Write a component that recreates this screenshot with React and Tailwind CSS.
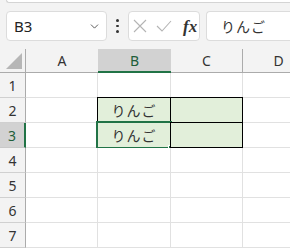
import { Fragment } from 'react';
import { ChevronDown } from 'lucide-react';

const COLS = ['A', 'B', 'C', 'D'];
const ROWS = [1, 2, 3, 4, 5, 6, 7];

// cells with values / fill
const values = { B2: 'りんご', B3: 'りんご' };
const filled = ['B2', 'C2', 'B3', 'C3'];
const active = 'B3';

function Cell({ id }) {
  const isFilled = filled.includes(id);
  const isActive = id === active;
  return (
    <div
      className={`relative border-r border-b border-[#e1e1e1] flex items-center justify-center text-[14px] text-[#333] ${
        isFilled ? 'bg-[#e2efda]' : 'bg-white'
      }`}
    >
      {isFilled && <span className="absolute -top-px -left-px -right-px -bottom-px border border-black" />}
      {values[id] && <span className="relative tracking-[1px]">{values[id]}</span>}
      {isActive && (
        <>
          <span className="absolute -top-[2px] -left-[2px] -right-[2px] -bottom-[2px] border-2 border-[#217346]" />
          <span className="absolute -right-[4px] -bottom-[4px] w-[6px] h-[6px] bg-[#217346] border border-white" />
        </>
      )}
    </div>
  );
}

export default function App() {
  return (
    <div
      className="w-[290px] h-[248px] overflow-hidden bg-[#f3f3f3] text-[#222]"
      style={{ fontFamily: '"Noto Sans", "Noto Sans CJK JP", sans-serif' }}
    >
      {/* ribbon edge */}
      <div className="h-[3px] ml-[6px] bg-white border-b border-l border-[#d4d4d4] rounded-bl-[5px]" />

      {/* formula bar */}
      <div className="mt-[8px] h-[30px] flex items-center pl-[6px]">
        <div className="w-[101px] h-[30px] bg-white border border-[#dcdcdc] rounded-[4px] flex items-center justify-between pl-[7px] pr-[5px]">
          <span className="text-[15px] leading-none">B3</span>
          <ChevronDown size={13} strokeWidth={1.6} className="text-[#444]" />
        </div>
        <div className="ml-[9px] w-[3px] flex flex-col gap-[3px]">
          <span className="w-[2.5px] h-[2.5px] bg-[#333] rounded-full" />
          <span className="w-[2.5px] h-[2.5px] bg-[#333] rounded-full" />
          <span className="w-[2.5px] h-[2.5px] bg-[#333] rounded-full" />
        </div>
        <div className="ml-[9px] w-[72px] h-[30px] bg-white border border-[#dcdcdc] rounded-[4px] flex items-center pl-[4px]">
          <svg width="14" height="14" viewBox="0 0 14 14" className="text-[#b4b4b4]">
            <path d="M1 1 L13 13 M13 1 L1 13" stroke="currentColor" strokeWidth="1.1" fill="none" />
          </svg>
          <svg width="16" height="12" viewBox="0 0 16 12" className="ml-[9px] text-[#b4b4b4]">
            <path d="M1 6 L6 11 L15 1" stroke="currentColor" strokeWidth="1.1" fill="none" />
          </svg>
          <span
            className="ml-[11px] text-[17px] italic font-bold leading-none text-[#333]"
            style={{ fontFamily: '"Liberation Serif", serif' }}
          >
            fx
          </span>
        </div>
        <div className="ml-[6px] flex-1 h-[30px] bg-white border border-[#dcdcdc] border-r-0 rounded-l-[4px] flex items-center pl-[14px] text-[14px] text-[#333] tracking-[1px]">
          りんご
        </div>
      </div>

      {/* sheet */}
      <div className="mt-[8px] grid grid-cols-[26px_72px_73px_72px_72px] grid-rows-[24px_repeat(7,25px)]">
        {/* corner */}
        <div className="relative border-r border-b border-[#ababab] bg-[#f3f3f3] flex items-end justify-end pr-[3px] pb-[3px]">
          <span className="w-[16px] h-[16px] bg-[#b6b6b6] [clip-path:polygon(100%_0,100%_100%,0_100%)]" />
        </div>
        {COLS.map(c => (
          <div
            key={c}
            className={`flex items-center justify-center text-[14px] ${
              c === 'B'
                ? 'bg-[#d2d2d2] border-b-2 border-[#217346] text-[#1e5e3a]'
                : 'bg-[#f3f3f3] border-r border-b border-[#ababab] text-[#333]'
            } ${c === 'A' ? 'border-r-0' : ''}`}
          >
            {c}
          </div>
        ))}

        {ROWS.map(r => (
          <Fragment key={r}>
            <div
              className={`flex items-center justify-center text-[14px] border-b ${
                r === 3
                  ? 'bg-[#d2d2d2] border-r-2 border-r-[#217346] border-b-[#c8c8c8] text-[#1e5e3a]'
                  : 'bg-[#f3f3f3] border-r border-r-[#ababab] border-b-[#d0d0d0] text-[#333]'
              }`}
            >
              {r}
            </div>
            {COLS.map(c => (
              <Cell key={`${c}${r}`} id={`${c}${r}`} />
            ))}
          </Fragment>
        ))}
      </div>
    </div>
  );
}
